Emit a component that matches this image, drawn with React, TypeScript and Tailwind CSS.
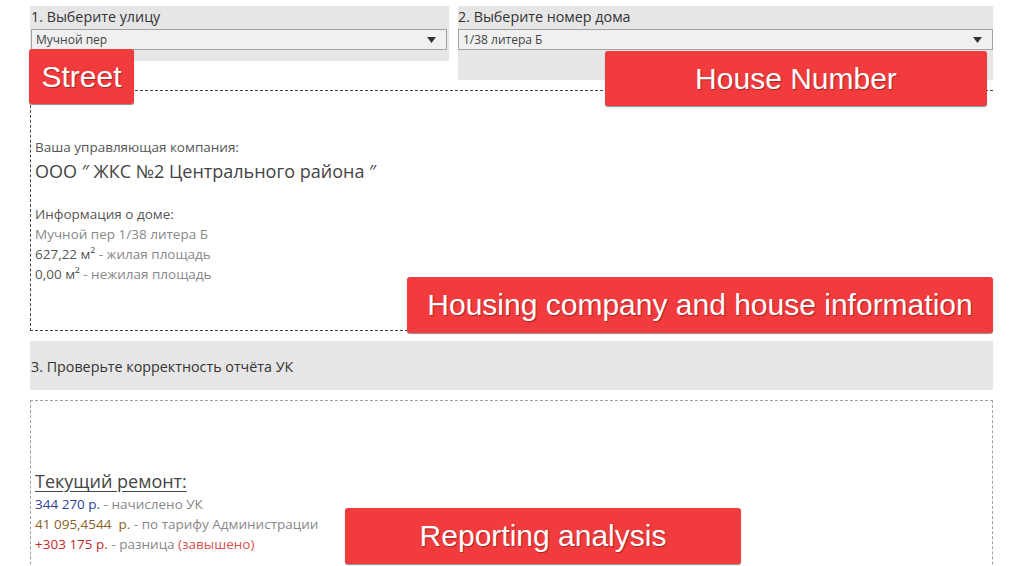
import React from "react";

const Arrow = () => (
  <svg width="9" height="6" viewBox="0 0 9 6" className="shrink-0">
    <path d="M0 0 L9 0 L4.5 6 Z" fill="#333" />
  </svg>
);

const Dropdown = ({ value, className }: { value: string; className: string }) => (
  <div
    className={`h-[21px] flex items-center justify-between bg-[#f0f0f0] border border-[#a3a3a3] pl-[4px] pr-[10px] text-[12px] text-[#444] ${className}`}
  >
    <span>{value}</span>
    <Arrow />
  </div>
);

const Tag = ({ text, className }: { text: string; className: string }) => (
  <div
    className={`absolute flex items-center justify-center bg-[#f23b3d] rounded-[3px] shadow-[0_1px_1px_rgba(0,0,0,0.45)] text-white text-[30px] leading-none [text-shadow:1px_1px_1px_rgba(0,0,0,0.35)] ${className}`}
    style={{ fontFamily: '"Liberation Sans", Arial, sans-serif' }}
  >
    {text}
  </div>
);

export default function App() {
  return (
    <div
      className="relative w-[1023px] h-[566px] overflow-hidden bg-white pl-[30px] pr-[30px] pt-[6px]"
      style={{ fontFamily: '"Open Sans", "Noto Sans", sans-serif' }}
    >
      {/* Top row */}
      <div className="flex items-start gap-[9px]">
        <div className="w-[419px] h-[55px] bg-[#e6e6e6] flex flex-col">
          <div className="h-[23px] pt-[1px] text-[14.3px] leading-[20px] text-[#333] pl-[1px]">
            1. Выберите улицу
          </div>
          <Dropdown value="Мучной пер" className="ml-[1px] w-[416px]" />
        </div>
        <div className="flex-1 h-[74px] bg-[#e6e6e6] flex flex-col">
          <div className="h-[23px] pt-[1px] text-[14.3px] leading-[20px] text-[#333]">
            2. Выберите номер дома
          </div>
          <Dropdown value="1/38 литера Б" className="w-full pr-[9px]" />
        </div>
      </div>

      {/* Box 1 */}
      <div className="mt-[10px] h-[241px] border border-r-0 border-dashed border-[#444] pl-[4px] pt-[46px]">
        <div className="text-[13.5px] leading-[20px] text-[#555]">Ваша управляющая компания:</div>
        <div className="mt-[2px] text-[18px] leading-[24px] text-[#444]">
          ООО ″ ЖКС №2 Центрального района ″
        </div>
        <div className="mt-[21px] text-[13.5px] leading-[20px] text-[#555]">Информация о доме:</div>
        <div className="text-[13.5px] leading-[20px] text-[#888]">Мучной пер 1/38 литера Б</div>
        <div className="text-[13.5px] leading-[20px] text-[#888]">
          <span className="text-[#555]">627,22 м²</span> - жилая площадь
        </div>
        <div className="text-[13.5px] leading-[20px] text-[#888]">
          <span className="text-[#555]">0,00 м²</span> - нежилая площадь
        </div>
      </div>

      {/* Section 3 band */}
      <div className="mt-[10px] h-[49px] bg-[#e6e6e6] flex items-center pt-[3px] pl-[1px] text-[14.3px] text-[#333]">
        3. Проверьте корректность отчёта УК
      </div>

      {/* Box 2 */}
      <div className="mt-[10px] h-[220px] border border-dashed border-[#a0a0a0] pl-[4px] pt-[68px]">
        <div className="text-[18px] leading-[24px] text-[#444] underline underline-offset-[3px]">
          Текущий ремонт:
        </div>
        <div className="mt-[1px] text-[13.5px] leading-[20px] text-[#888]">
          <span className="text-[#2f3d9e]">344 270 р.</span> - начислено УК
        </div>
        <div className="text-[13.5px] leading-[20px] text-[#888]">
          <span className="text-[#8a6424]">41 095,4544&nbsp; р.</span> - по тарифу Администрации
        </div>
        <div className="text-[13.5px] leading-[20px] text-[#888]">
          <span className="text-[#c62a2a]">+303 175 р.</span> - разница{" "}
          <span className="text-[#d9504f]">(завышено)</span>
        </div>
      </div>

      {/* Annotation tags */}
      <Tag text="Street" className="left-[29px] top-[49px] w-[105px] h-[55px]" />
      <Tag text="House Number" className="left-[605px] top-[51px] w-[382px] h-[55px]" />
      <Tag text="Housing company and house information" className="left-[407px] top-[277px] w-[586px] h-[56px]" />
      <Tag text="Reporting analysis" className="left-[345px] top-[508px] w-[396px] h-[56px]" />
    </div>
  );
}
